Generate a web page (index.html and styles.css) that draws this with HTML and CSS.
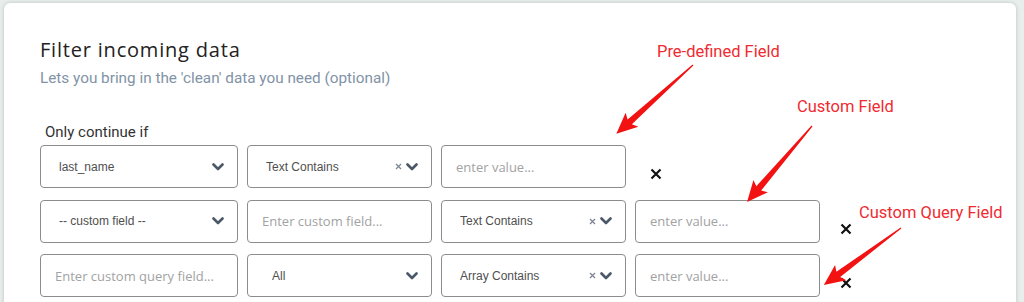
FILE: index.html
```html
<!DOCTYPE html>
<html>
<head>
    <title>Filter incoming data</title>
    <link rel="stylesheet" href="styles.css">
</head>
<body>
    <div class="card">
        <h1>Filter incoming data</h1>
        <p class="subtitle">Lets you bring in the 'clean' data you need (optional)</p>
        <div class="label">Only continue if</div>

        <div class="row">
            <div class="select wide">
                <span>last_name</span>
                <svg class="chevron" width="12" height="8" viewBox="0 0 12 8"><polyline points="1.5,1.5 6,6 10.5,1.5"/></svg>
            </div>
            <div class="select">
                <span>Text Contains</span>
                <span class="icons">
                    <svg class="clear" width="7" height="7" viewBox="0 0 7 7"><path d="M1 1L6 6M6 1L1 6"/></svg>
                    <svg class="chevron" width="12" height="8" viewBox="0 0 12 8"><polyline points="1.5,1.5 6,6 10.5,1.5"/></svg>
                </span>
            </div>
            <input type="text" class="field" placeholder="enter value...">
            <svg class="remove first" width="12" height="12" viewBox="0 0 12 12"><path d="M1.5 1.5L10.5 10.5M10.5 1.5L1.5 10.5"/></svg>
        </div>

        <div class="row">
            <div class="select wide">
                <span>-- custom field --</span>
                <svg class="chevron" width="12" height="8" viewBox="0 0 12 8"><polyline points="1.5,1.5 6,6 10.5,1.5"/></svg>
            </div>
            <input type="text" class="field" placeholder="Enter custom field...">
            <div class="select">
                <span>Text Contains</span>
                <span class="icons">
                    <svg class="clear" width="7" height="7" viewBox="0 0 7 7"><path d="M1 1L6 6M6 1L1 6"/></svg>
                    <svg class="chevron" width="12" height="8" viewBox="0 0 12 8"><polyline points="1.5,1.5 6,6 10.5,1.5"/></svg>
                </span>
            </div>
            <input type="text" class="field" placeholder="enter value...">
            <svg class="remove" width="12" height="12" viewBox="0 0 12 12"><path d="M1.5 1.5L10.5 10.5M10.5 1.5L1.5 10.5"/></svg>
        </div>

        <div class="row">
            <input type="text" class="field wide" placeholder="Enter custom query field...">
            <div class="select">
                <span class="short">All</span>
                <svg class="chevron" width="12" height="8" viewBox="0 0 12 8"><polyline points="1.5,1.5 6,6 10.5,1.5"/></svg>
            </div>
            <div class="select">
                <span>Array Contains</span>
                <span class="icons">
                    <svg class="clear" width="7" height="7" viewBox="0 0 7 7"><path d="M1 1L6 6M6 1L1 6"/></svg>
                    <svg class="chevron" width="12" height="8" viewBox="0 0 12 8"><polyline points="1.5,1.5 6,6 10.5,1.5"/></svg>
                </span>
            </div>
            <input type="text" class="field" placeholder="enter value...">
            <svg class="remove" width="12" height="12" viewBox="0 0 12 12"><path d="M1.5 1.5L10.5 10.5M10.5 1.5L1.5 10.5"/></svg>
        </div>
    </div>

    <!-- annotations drawn over the screenshot -->
    <div class="note note-predefined">Pre-defined Field</div>
    <div class="note note-custom">Custom Field</div>
    <div class="note note-query">Custom Query Field</div>
    <svg class="arrows" width="1024" height="302" viewBox="0 0 1024 302">
        <path transform="translate(693 65) rotate(138.1)" d="M0 -0.6L85 -3.2L82 -9.5L103 0L82 9.5L85 3.2L0 0.6Z"/>
        <path transform="translate(812 126) rotate(130.5)" d="M0 -0.6L82 -3.2L79 -9.5L100 0L79 9.5L82 3.2L0 0.6Z"/>
        <path transform="translate(901 228) rotate(143.5)" d="M0 -0.6L78 -3.2L75 -9.5L96 0L75 9.5L78 3.2L0 0.6Z"/>
    </svg>
</body>
</html>
```

FILE: styles.css
```css
body {
    margin: 0;
    padding: 3px 8px 0 4px;
    background-color: #e7eeeb;
    font-family: Roboto, "Liberation Sans", Arial, sans-serif;
    color: #333;
    position: relative;
    height: 302px;
    box-sizing: border-box;
    overflow: hidden;
}
.card {
    background: #fff;
    border-radius: 6px;
    box-shadow: 0 0 4px rgba(0, 0, 0, 0.18);
    padding: 34px 0 0 36px;
    min-height: 340px;
    box-sizing: border-box;
}
h1 {
    margin: 0;
    font-family: "Open Sans", sans-serif;
    font-weight: 400;
    font-size: 20px;
    line-height: 26px;
    letter-spacing: 0.8px;
    color: #222;
}
.subtitle {
    margin: 5px 0 0;
    font-size: 15.3px;
    line-height: 20px;
    color: #8193a6;
}
.label {
    margin: 35px 0 4px 5px;
    font-size: 15px;
    line-height: 18px;
    color: #333;
}
.row {
    display: flex;
    gap: 9px;
    margin-bottom: 11.5px;
}
.select, .field {
    width: 185px;
    height: 43px;
    box-sizing: border-box;
    border: 1.5px solid #8c8c8c;
    border-radius: 4px;
    background: #fff;
}
.wide {
    width: 198px;
}
.select {
    display: flex;
    align-items: center;
    justify-content: space-between;
    padding: 0 13px 0 18px;
    font-family: "Liberation Sans", Arial, sans-serif;
    font-size: 12px;
    color: #4f4f4f;
}
.select .short {
    margin-left: 6px;
}
.field {
    padding: 0 14px;
    font-family: "Open Sans", sans-serif;
    font-size: 13px;
    color: #444;
    outline: none;
}
.field::placeholder {
    color: #a2a2a2;
}
.icons {
    display: flex;
    align-items: center;
    gap: 4px;
}
.chevron polyline {
    fill: none;
    stroke: #4b5869;
    stroke-width: 2.6;
    stroke-linecap: round;
    stroke-linejoin: round;
}
.clear path {
    stroke: #7d8794;
    stroke-width: 1.3;
}
.remove {
    align-self: flex-end;
    margin: 0 0 8px 11px;
    flex-shrink: 0;
}
.remove.first {
    margin-left: 15px;
}
.remove path {
    stroke: #111;
    stroke-width: 2.2;
}
.note {
    position: absolute;
    font-family: Roboto, sans-serif;
    font-size: 16.5px;
    line-height: 20px;
    color: #ef2b31;
    white-space: nowrap;
}
.note-predefined {
    left: 657px;
    top: 42px;
}
.note-custom {
    left: 797px;
    top: 97px;
}
.note-query {
    left: 859px;
    top: 203px;
}
.arrows {
    position: absolute;
    left: 0;
    top: 0;
    pointer-events: none;
}
.arrows path {
    fill: #f31212;
}
```
